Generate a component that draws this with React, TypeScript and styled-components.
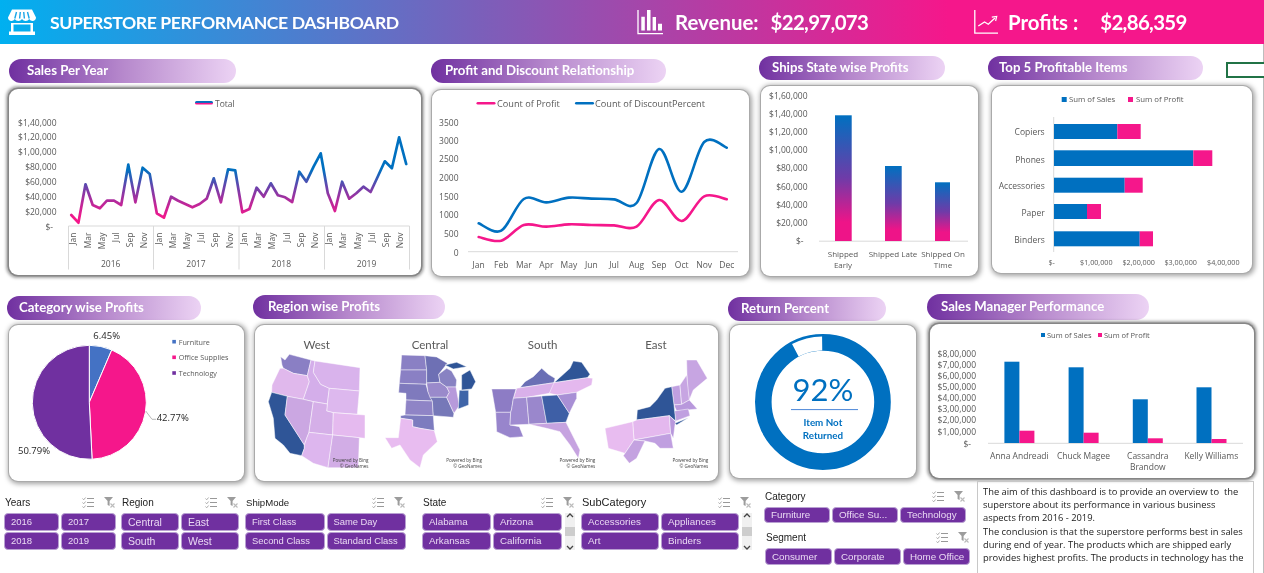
import React from "react";
import styled, { createGlobalStyle } from "styled-components";

const Global = createGlobalStyle`
  html, body { margin: 0; padding: 0; background: #fff; }
`;

const BLUE = "#0070C0";
const PINK = "#F5178B";
const PURPLE = "#7030A0";
const AXIS = "#D9D9D9";

const Page = styled.div`
  position: relative;
  width: 1264px;
  height: 573px;
  overflow: hidden;
  background: #fff;
  font-family: "Lato", "Liberation Sans", sans-serif;
  filter: blur(0.35px);
`;

const Header = styled.header`
  display: flex;
  align-items: center;
  height: 44px;
  padding-left: 8px;
  color: #fff;
  font-weight: 700;
  background: linear-gradient(90deg, #00b0f0 0%, #7b5fba 38%, #f5178b 75%, #f5178b 100%);
`;

const Title = styled.h1`
  margin: 0 0 0 14px;
  width: 587px;
  font-size: 17.6px;
  font-weight: 700;
  letter-spacing: -0.4px;
  white-space: nowrap;
`;

const Kpi = styled.div<{ $w: number; $gap: number; $valueGap: number }>`
  display: flex;
  align-items: center;
  width: ${(p) => p.$w}px;
  font-size: 20.4px;
  white-space: nowrap;
  gap: ${(p) => p.$gap}px;
  & > span + span {
    margin-left: ${(p) => p.$valueGap}px;
    letter-spacing: -0.65px;
  }
`;

const Rows = styled.main`
  border-right: 1px solid #bdbdbd;
  height: 529px;
  box-sizing: border-box;
`;

const Row = styled.div<{ $h: number }>`
  display: flex;
  align-items: flex-start;
  height: ${(p) => p.$h}px;
`;

const Panel = styled.section<{ $gap: number; $top: number }>`
  margin-left: ${(p) => p.$gap}px;
  margin-top: ${(p) => p.$top}px;
  flex: none;
`;

const Pill = styled.h2<{ $w: number; $h?: number; $pad: number }>`
  display: flex;
  align-items: center;
  box-sizing: border-box;
  width: ${(p) => p.$w}px;
  height: ${(p) => p.$h ?? 24}px;
  margin: 0;
  padding: 0 0 2px ${(p) => p.$pad}px;
  border-radius: 13px;
  color: #fff;
  font-size: 13.2px;
  font-weight: 700;
  white-space: nowrap;
  background: linear-gradient(90deg, ${PURPLE} 0%, #b688cc 50%, #ecd3f4 100%);
`;

const Card = styled.div<{ $w: number; $h: number; $ml: number; $mt: number; $strong?: boolean }>`
  width: ${(p) => p.$w}px;
  height: ${(p) => p.$h}px;
  margin-left: ${(p) => p.$ml}px;
  margin-top: ${(p) => p.$mt}px;
  border-radius: 9px;
  background: #fff;
  box-shadow: ${(p) =>
    p.$strong
      ? "0 0 0 1.5px #868686, 0 0 3px 2.5px rgba(0,0,0,.35)"
      : "0 0 0 1px #aaa, 1px 1px 5px 1.5px rgba(0,0,0,.36)"};
`;

const Chart = styled.svg`
  display: block;
  width: 100%;
  height: 100%;
  border-radius: inherit;
`;

const Label = styled.text<{ $size?: number; $color?: string; $weight?: number; $font?: string }>`
  font-family: ${(p) => p.$font ?? '"Open Sans"'}, "Liberation Sans", sans-serif;
  font-size: ${(p) => p.$size ?? 8.5}px;
  font-weight: ${(p) => p.$weight ?? 400};
  fill: ${(p) => p.$color ?? "#595959"};
  dominant-baseline: central;
`;

const CellCursor = styled.div`
  position: absolute;
  left: 1226px;
  top: 62px;
  width: 40px;
  height: 16px;
  box-sizing: border-box;
  border: 2px solid #217346;
  background: #fff;
`;

const Filters = styled.div`
  display: flex;
  align-items: flex-start;
  height: 92px;
`;

const Slicer = styled.div<{ $w: number; $left: number }>`
  width: ${(p) => p.$w}px;
  margin-left: ${(p) => p.$left}px;
  padding-top: 14px;
  flex: none;
`;

const SlicerHead = styled.div`
  display: flex;
  align-items: center;
  height: 14px;
  margin-bottom: 4px;
  padding-right: 1px;
`;

const SlicerName = styled.span<{ $size?: number }>`
  flex: 1;
  padding-left: 1px;
  font-family: "Liberation Sans", sans-serif;
  font-size: ${(p) => p.$size ?? 10}px;
  color: #222;
`;

const SlicerTools = styled.span`
  display: flex;
  align-items: center;
  gap: 10px;
`;

const SlicerBody = styled.div`
  display: flex;
  gap: 3px;
`;

const Buttons = styled.div<{ $cols: number; $w?: number }>`
  display: grid;
  flex: none;
  width: ${(p) => (p.$w ? `${p.$w}px` : "100%")};
  grid-template-columns: repeat(${(p) => p.$cols}, 1fr);
  gap: 1px 2px;
`;

const Btn = styled.div<{ $h?: number; $size?: number }>`
  box-sizing: border-box;
  height: ${(p) => p.$h ?? 18}px;
  padding-left: 6px;
  border: 1px solid #b9a0d2;
  border-radius: 4px;
  background: ${PURPLE};
  color: #ead9f3;
  font-family: "Liberation Sans", sans-serif;
  font-size: ${(p) => p.$size ?? 9.8}px;
  line-height: ${(p) => (p.$h ?? 18) - 2}px;
  white-space: nowrap;
  overflow: hidden;
`;

const Scroll = styled.div`
  display: flex;
  flex-direction: column;
  align-items: center;
  justify-content: space-between;
  width: 10px;
  height: 37px;
  background: #f0f0f0;
`;

const ScrollThumb = styled.i`
  display: block;
  width: 10px;
  height: 9px;
  background: #cdcdcd;
`;

const Stack = styled.div`
  width: 206px;
  margin-left: 12px;
  flex: none;
`;

const StackSlicer = styled.div<{ $top: number; $ml: number; $w: number }>`
  margin-top: ${(p) => p.$top}px;
  margin-left: ${(p) => p.$ml}px;
  width: ${(p) => p.$w}px;
`;

const Note = styled.div`
  flex: none;
  box-sizing: border-box;
  width: 277px;
  height: 92px;
  margin-left: 7px;
  padding: 3px 4px 0 5px;
  border: 1px solid #c8c8c8;
  border-bottom: 0;
  font-family: "Open Sans", "Liberation Sans", sans-serif;
  font-size: 9.35px;
  line-height: 13.2px;
  color: #1c1c1c;
  overflow: hidden;
`;

/* ---------- helpers ---------- */

type Pt = [number, number];

const smooth = (pts: Pt[]) => {
  let d = `M${pts[0][0]} ${pts[0][1]}`;
  for (let i = 0; i < pts.length - 1; i++) {
    const p0 = pts[Math.max(i - 1, 0)];
    const p1 = pts[i];
    const p2 = pts[i + 1];
    const p3 = pts[Math.min(i + 2, pts.length - 1)];
    const c1: Pt = [p1[0] + (p2[0] - p0[0]) / 6, p1[1] + (p2[1] - p0[1]) / 6];
    const c2: Pt = [p2[0] - (p3[0] - p1[0]) / 6, p2[1] - (p3[1] - p1[1]) / 6];
    d += `C${c1[0]} ${c1[1]} ${c2[0]} ${c2[1]} ${p2[0]} ${p2[1]}`;
  }
  return d;
};

const polar = (cx: number, cy: number, r: number, turn: number): Pt => {
  const a = turn * 2 * Math.PI - Math.PI / 2;
  return [cx + r * Math.cos(a), cy + r * Math.sin(a)];
};

const slice = (cx: number, cy: number, r: number, from: number, to: number) => {
  const [x1, y1] = polar(cx, cy, r, from);
  const [x2, y2] = polar(cx, cy, r, to);
  return `M${cx} ${cy}L${x1} ${y1}A${r} ${r} 0 ${to - from > 0.5 ? 1 : 0} 1 ${x2} ${y2}Z`;
};

/* ---------- icons ---------- */

const StoreIcon = () => (
  <svg width="28" height="26" viewBox="0 0 28 26">
    <path
      d="M4 0.5H24L28 8.5C28 10.8 26.4 12 24.7 12C23.2 12 22 11.2 21.2 10C20.5 11.2 19.2 12 17.6 12C16.2 12 14.9 11.2 14 10C13.1 11.2 11.8 12 10.4 12C8.8 12 7.5 11.2 6.8 10C6 11.2 4.8 12 3.3 12C1.6 12 0 10.8 0 8.5Z"
      fill="#fff"
    />
    <path d="M8.5 3L6.8 9.5M12.3 3L11.6 9.5M15.7 3L16.4 9.5M19.5 3L21.2 9.5" stroke="#19a6e8" strokeWidth="1.4" />
    <path
      fillRule="evenodd"
      d="M3 14H25V22.5H27V26H1V22.5H3ZM5.5 15.5V22.5H22.5V15.5Z"
      fill="#fff"
    />
  </svg>
);

const BarsIcon = () => (
  <svg width="26" height="25" viewBox="0 0 26 25">
    <path d="M1 0V23.6H26" fill="none" stroke="#fff" strokeWidth="1.3" />
    <path fill="#fff" d="M4.3 6.7H7.8V20.4H4.3ZM10 0H13.5V20.4H10ZM15.6 7H19V20.4H15.6ZM21 13.7H25V20.4H21Z" />
  </svg>
);

const TrendIcon = () => (
  <svg width="24" height="24" viewBox="0 0 24 24">
    <path d="M.8 0V23.2H24" fill="none" stroke="#fff" strokeWidth="1.3" />
    <path d="M4.3 16L10.5 12L14.3 14.2L21 8" fill="none" stroke="#fff" strokeWidth="1.3" />
    <path d="M17.8 7.2L22.7 6.4L21.6 11" fill="none" stroke="#fff" strokeWidth="1.2" />
  </svg>
);

const MultiIcon = () => (
  <svg width="12" height="11" viewBox="0 0 12 11">
    <path d="M5 1.5H12M5 5.5H12M5 9.5H12" stroke="#999" strokeWidth="1.2" />
    <path d="M.5 1.5L1.7 2.8L3.6.5M.5 5.5L1.7 6.8L3.6 4.5M.5 9.5L1.7 10.8L3.6 8.5" fill="none" stroke="#aaa" strokeWidth="1" />
  </svg>
);

const ClearIcon = () => (
  <svg width="11" height="11" viewBox="0 0 11 11">
    <path d="M0 0H9L5.6 4V9L3.6 8V4Z" fill="#9c9c9c" />
    <path d="M6.5 6.5L10.5 10.5M10.5 6.5L6.5 10.5" stroke="#bbb" strokeWidth="1.1" />
  </svg>
);

const Chevron = ({ up }: { up?: boolean }) => (
  <svg width="8" height="5" viewBox="0 0 8 5" style={up ? undefined : { transform: "scaleY(-1)" }}>
    <path d="M1 4L4 1L7 4" fill="none" stroke="#444" strokeWidth="1.3" />
  </svg>
);

/* ---------- charts ---------- */

const MONTHS = ["Jan", "Mar", "May", "Jul", "Sep", "Nov"];
const SALES = [
  645, 668, 553, 615, 625, 602, 602, 615, 494, 607, 503, 522, 640, 653, 590, 602, 612, 622, 612, 596, 535, 607, 508, 511,
  637, 627, 563, 590, 550, 586, 592, 606, 515, 545, 500, 460, 580, 633, 545, 596, 580, 560, 576, 530, 484, 505, 412, 492,
];

const SalesChart = () => {
  const line = SALES.map((y, i) => `${(71.3 + i * 7.125).toFixed(1)},${(y / 3).toFixed(1)}`).join(" ");
  const labels = ["$1,40,000", "$1,20,000", "$1,00,000", "$80,000", "$60,000", "$40,000", "$20,000"];
  const ticks = [68.5, 153.5, 239, 324.5, 409.5];
  return (
    <Chart viewBox="9 89 412 186">
      <defs>
        <linearGradient id="salesStroke" gradientUnits="userSpaceOnUse" x1="0" y1="218" x2="0" y2="170">
          <stop offset="0" stopColor={PINK} />
          <stop offset="0.35" stopColor="#B32A9C" />
          <stop offset="0.65" stopColor="#6A43AC" />
          <stop offset="1" stopColor={BLUE} />
        </linearGradient>
        <linearGradient id="legendStroke" gradientUnits="userSpaceOnUse" x1="0" y1="101" x2="0" y2="104.5">
          <stop offset="0.4" stopColor={BLUE} />
          <stop offset="0.7" stopColor={PINK} />
        </linearGradient>
      </defs>
      <rect x="195" y="101" width="18" height="3.4" fill="url(#legendStroke)" rx="1.5" />
      <Label x="215" y="103">Total</Label>
      {labels.map((t, i) => (
        <Label key={t} x="56.5" y={122 + i * 14.9} textAnchor="end">{t}</Label>
      ))}
      <Label x="53" y="226.7" textAnchor="end">$-</Label>
      <path d={`M68.5 226H409.5${ticks.map((x) => `M${x} 226V269.5`).join("")}`} stroke={AXIS} fill="none" />
      <polyline points={line} fill="none" stroke="url(#salesStroke)" strokeWidth="2.7" strokeLinejoin="round" strokeLinecap="round" />
      {[0, 1, 2, 3].map((yr) => (
        <g key={yr}>
          {MONTHS.map((m, i) => (
            <Label key={m} textAnchor="end" transform={`translate(${72.8 + yr * 85.3 + i * 14.2} 232.5) rotate(-90)`}>{m}</Label>
          ))}
          <Label x={110.7 + yr * 85.3} y="263" textAnchor="middle">{2016 + yr}</Label>
        </g>
      ))}
    </Chart>
  );
};

const DISCOUNT = [670, 692, 597, 607, 593, 596, 598, 609, 447, 575, 426, 443];
const PROFIT = [711, 722, 675, 680, 673, 675, 676, 680, 600, 663, 589, 598];
const MONTHS12 = ["Jan", "Feb", "Mar", "Apr", "May", "Jun", "Jul", "Aug", "Sep", "Oct", "Nov", "Dec"];

const RelationChart = () => {
  const pts = (a: number[]) => a.map((y, i): Pt => [478.7 + i * 22.55, y / 3]);
  const ys = [252, 233.3, 214.6, 196, 177.4, 158.7, 140.2, 122];
  return (
    <Chart viewBox="432 90 317 186">
      <rect x="476.5" y="102" width="19" height="2.6" rx="1.3" fill={PINK} />
      <Label x="497" y="103" $size={9.2}>Count of Profit</Label>
      <rect x="575" y="102" width="19" height="2.6" rx="1.3" fill={BLUE} />
      <Label x="595" y="103" $size={9.2}>Count of DiscountPercent</Label>
      {ys.map((y, i) => (
        <Label key={i} x="458.5" y={y} textAnchor="end">{i * 500}</Label>
      ))}
      <path d="M468 251.7H738" stroke={AXIS} />
      {MONTHS12.map((m, i) => (
        <Label key={m} x={478.7 + i * 22.55} y="264.3" textAnchor="middle">{m}</Label>
      ))}
      <path d={smooth(pts(DISCOUNT))} fill="none" stroke={BLUE} strokeWidth="2.6" strokeLinecap="round" />
      <path d={smooth(pts(PROFIT))} fill="none" stroke={PINK} strokeWidth="2.6" strokeLinecap="round" />
    </Chart>
  );
};

const ShipChart = () => {
  const ys = ["$1,60,000", "$1,40,000", "$1,20,000", "$1,00,000", "$80,000", "$60,000", "$40,000", "$20,000"];
  const bars: [number, number, number][] = [
    [835, 16.7, 115.3],
    [885, 16.7, 166],
    [935, 15, 182.3],
  ];
  return (
    <Chart viewBox="761 86 217 190">
      <defs>
        <linearGradient id="shipBar" x1="0" y1="0" x2="0" y2="1">
          <stop offset="0" stopColor={BLUE} />
          <stop offset="0.5" stopColor="#6F3BA8" />
          <stop offset="0.85" stopColor="#EE1488" />
          <stop offset="1" stopColor="#EE1488" />
        </linearGradient>
      </defs>
      {ys.map((t, i) => (
        <Label key={t} x="807.5" y={95.7 + i * 18.07} textAnchor="end">{t}</Label>
      ))}
      <Label x="803.5" y="240.7" textAnchor="end">$-</Label>
      <path d="M819 241.2H968" stroke={AXIS} />
      {bars.map(([x, w, top]) => (
        <rect key={x} x={x} y={top} width={w} height={241 - top} fill="url(#shipBar)" />
      ))}
      <Label x="843" y="253" textAnchor="middle" $size={8}>Shipped</Label>
      <Label x="843" y="264" textAnchor="middle" $size={8}>Early</Label>
      <Label x="893" y="253" textAnchor="middle" $size={8}>Shipped Late</Label>
      <Label x="943" y="253" textAnchor="middle" $size={8}>Shipped On</Label>
      <Label x="943" y="264" textAnchor="middle" $size={8}>Time</Label>
    </Chart>
  );
};

const ItemsChart = () => {
  const rows: [string, number, number, number, number, number][] = [
    ["Copiers", 124, 15, 1117.3, 1140.7, 131.7],
    ["Phones", 150.3, 15.7, 1193.3, 1212.3, 159],
    ["Accessories", 177.7, 15, 1124.7, 1142.7, 185.3],
    ["Paper", 204, 15, 1087, 1101, 212],
    ["Binders", 231.3, 15, 1139.7, 1153, 239],
  ];
  const xs: [string, number][] = [["$-", 1051.7], ["$1,00,000", 1096.3], ["$2,00,000", 1138.7], ["$3,00,000", 1180.7], ["$4,00,000", 1223.3]];
  return (
    <Chart viewBox="992 86 260 187">
      <rect x="1061.7" y="97" width="5" height="5" fill={BLUE} />
      <Label x="1069" y="99.3" $size={7.8}>Sum of Sales</Label>
      <rect x="1128" y="97" width="5" height="5" fill={PINK} />
      <Label x="1136" y="99.3" $size={7.8}>Sum of Profit</Label>
      <path d="M1053.7 117V252" stroke={AXIS} />
      {rows.map(([name, y, h, b, p, ty]) => (
        <g key={name}>
          <rect x="1054" y={y} width={b - 1054} height={h} fill={BLUE} />
          <rect x={b} y={y} width={p - b} height={h} fill={PINK} />
          <Label x="1044.7" y={ty} textAnchor="end">{name}</Label>
        </g>
      ))}
      {xs.map(([t, x]) => (
        <Label key={t} x={x} y="262" textAnchor="middle" $size={7.2}>{t}</Label>
      ))}
    </Chart>
  );
};

const PieChart = () => {
  const cx = 89.3;
  const cy = 402.3;
  const r = 57;
  return (
    <Chart viewBox="9 325 235 156">
      <path d={slice(cx, cy, r, 0, 0.0645)} fill="#4472C4" stroke="#fff" />
      <path d={slice(cx, cy, r, 0.0645, 0.4922)} fill={PINK} stroke="#fff" />
      <path d={slice(cx, cy, r, 0.4922, 1)} fill={PURPLE} stroke="#fff" />
      <path d="M145.7 411L152 419.3H156" fill="none" stroke="#a6a6a6" strokeWidth="0.8" />
      <Label x="106.7" y="335.7" textAnchor="middle" $size={9.5} $color="#262626">6.45%</Label>
      <Label x="156.7" y="417" $size={9.5} $color="#262626">42.77%</Label>
      <Label x="18" y="450.3" $size={9.5} $color="#262626">50.79%</Label>
      {[
        ["Furniture", "#4472C4", 341.7],
        ["Office Supplies", PINK, 357.3],
        ["Technology", PURPLE, 373],
      ].map(([t, c, y]) => (
        <g key={t as string}>
          <rect x="172.3" y={(y as number) - 1.8} width="3.6" height="3.6" fill={c as string} />
          <Label x="178.7" y={y as number} $size={7.2}>{t}</Label>
        </g>
      ))}
    </Chart>
  );
};

type Shape = [string, string];

const WEST_CENTRAL: Shape[] = [
  ["#8A7FC4", "92,215 105,225 118,208 183,225 172,272 130,265 100,250 96,240"],
  ["#E0B8EC", "90,250 100,250 130,265 172,272 178,290 160,343 112,334 65,322 66,300"],
  ["#2F5597", "65,322 112,334 105,390 163,480 163,490 155,512 120,505 100,480 75,460 70,400 55,350"],
  ["#D4AEEA", "183,225 195,228 190,262 212,298 238,310 232,357 190,350 160,343 178,290 172,272"],
  ["#D9B3EC", "195,228 330,248 328,318 238,310 212,298 190,262"],
  ["#DDB8EE", "238,310 328,318 322,388 250,383 230,378 232,357"],
  ["#CBA7E2", "112,334 160,343 190,350 177,442 170,460 163,480 105,390"],
  ["#D5AFE8", "190,350 232,357 230,378 250,383 248,450 177,442"],
  ["#E5BAEF", "250,383 345,390 345,460 248,450"],
  ["#DDB6EE", "177,442 248,450 234,548 190,535 155,512 163,490 163,480 170,460"],
  ["#D2ADE6", "248,450 328,458 325,548 234,548"],
  ["#8A80C4", "455,210 525,212 530,255 452,255"],
  ["#8A80C4", "452,255 530,255 530,294 528,298 448,295"],
  ["#7F7ABD", "448,295 528,298 534,320 547,348 468,345 468,325 446,323"],
  ["#8F84C6", "468,345 547,348 550,392 465,390"],
  ["#6E70B4", "525,212 560,216 592,235 566,268 570,292 530,294 530,255"],
  ["#9A8ACB", "530,294 570,292 590,306 598,322 590,337 540,337 534,320"],
  ["#7678B8", "540,337 590,337 612,385 610,397 550,392 547,348"],
  ["#8882C2", "566,268 590,250 605,258 620,285 618,306 590,306 570,292"],
  ["#B79ADB", "590,306 618,306 628,362 612,385 590,337 598,322"],
  ["#3F65A8", "628,316 656,316 656,360 625,372"],
  ["#2F5597", "635,270 660,255 677,290 665,312 635,315"],
  ["#2F5597", "585,240 620,232 650,245 610,252"],
  ["#7D7CBF", "452,392 465,390 550,392 553,437 510,430 488,425 488,405 452,400"],
  ["#E8BCF0", "452,400 488,405 488,425 510,430 553,437 562,470 520,510 510,548 480,525 450,480 425,490 405,458 445,458"],
];

const SOUTH_EAST: Shape[] = [
  ["#6A6FB5", "120,308 135,290 160,275 185,250 205,268 225,280 222,293"],
  ["#2F5597", "222,293 270,250 280,228 305,232 330,268 322,278"],
  ["#D9B0EA", "110,310 222,293 232,296 208,325 140,337 100,340"],
  ["#E4B8EE", "222,293 322,278 338,280 335,300 290,322 232,330 208,325"],
  ["#8D7CC5", "35,312 108,312 100,340 95,372 92,382 47,382 45,370"],
  ["#9885CC", "47,382 92,382 90,420 118,425 130,455 90,458 50,440"],
  ["#9F8BD0", "100,340 140,337 147,418 90,420 92,382 95,372"],
  ["#9A87CC", "140,337 185,333 200,415 147,418"],
  ["#3E5FA6", "185,333 232,330 268,385 258,412 200,415"],
  ["#A88FD5", "232,330 290,322 290,340 268,385"],
  ["#C6A3E0", "147,418 200,415 258,412 300,495 295,520 270,480 240,440 200,430"],
  ["#C7A5E2", "620,225 650,225 682,280 640,315 628,345 622,310"],
  ["#C0A0E0", "575,305 600,300 605,358 582,360"],
  ["#C7A5E2", "600,300 620,270 628,345 605,358"],
  ["#B898DC", "582,360 605,358 628,345 652,372 590,378"],
  ["#C0A0E0", "583,378 625,372 630,392 588,408"],
  ["#2F5597", "472,375 510,365 530,345 555,310 575,305 582,360 587,408 568,392 470,405"],
  ["#E4B8EE", "458,410 470,405 568,392 572,445 462,465"],
  ["#E8BCF0", "375,430 458,410 462,465 435,505 385,490"],
  ["#B898DC", "568,392 587,410 585,420 580,460 572,445"],
  ["#C09FE0", "462,465 572,445 580,490 540,490 525,475 495,468"],
  ["#C4A2E0", "462,465 495,468 470,520 448,535 430,512 435,505"],
  ["#2F5597", "585,415 625,398 590,420"],
];

const RegionChart = () => (
  <Chart viewBox="255 325 463 156">
    <g transform="translate(250 285) scale(.3333)" stroke="#fff" strokeWidth="1.4" strokeLinejoin="round">
      {WEST_CENTRAL.map(([c, p], i) => <polygon key={i} fill={c} points={p} />)}
    </g>
    <g transform="translate(480 285) scale(.3333)" stroke="#fff" strokeWidth="1.4" strokeLinejoin="round">
      {SOUTH_EAST.map(([c, p], i) => <polygon key={i} fill={c} points={p} />)}
    </g>
    {[["West", 316.7], ["Central", 430], ["South", 542.7], ["East", 656]].map(([t, x]) => (
      <Label key={t} x={x} y="344" textAnchor="middle" $size={11.5} $font="Lato">{t}</Label>
    ))}
    {[368.5, 482, 595.3, 708.3].map((x) => (
      <g key={x}>
        <Label x={x} y="460" textAnchor="end" $size={4.6} $color="#444">Powered by Bing</Label>
        <Label x={x} y="466.3" textAnchor="end" $size={4.6} $color="#444">© GeoNames</Label>
      </g>
    ))}
  </Chart>
);

const ReturnChart = () => {
  const cx = 822.9;
  const cy = 402;
  const [x1, y1] = polar(cx, cy, 58.6, -0.078);
  const [x2, y2] = polar(cx, cy, 58.6, -0.002);
  return (
    <Chart viewBox="730 325 186 153">
      <circle cx={cx} cy={cy} r="59.6" fill="none" stroke={BLUE} strokeWidth="16.6" />
      <path d={`M${x1} ${y1}A58.6 58.6 0 0 1 ${x2} ${y2}`} fill="none" stroke="#fff" strokeWidth="14" />
      <Label x={cx} y="389" textAnchor="middle" $size={31} $color={BLUE} $font="Lato">92%</Label>
      <path d="M791 409.6H858" stroke="#4A86D8" />
      <Label x={cx} y="422" textAnchor="middle" $size={9.8} $weight={700} $color={BLUE} $font="Lato">Item Not</Label>
      <Label x={cx} y="435" textAnchor="middle" $size={9.8} $weight={700} $color={BLUE} $font="Lato">Returned</Label>
    </Chart>
  );
};

const ManagerChart = () => {
  const ys = ["$8,00,000", "$7,00,000", "$6,00,000", "$5,00,000", "$4,00,000", "$3,00,000", "$2,00,000", "$1,00,000"];
  const tops = [353, 364.3, 375.7, 386.3, 397.3, 408.7, 419.7, 431.3];
  const bars: [number, number, number][] = [
    [1004.4, 361.7, 430.7],
    [1068.6, 367.3, 432.7],
    [1132.8, 399.3, 438.3],
    [1196.5, 387.3, 439],
  ];
  return (
    <Chart viewBox="930 324 324 154">
      <rect x="1041" y="333" width="4" height="4" fill={BLUE} />
      <Label x="1047" y="335.3" $size={7.5}>Sum of Sales</Label>
      <rect x="1098" y="333" width="4" height="4" fill={PINK} />
      <Label x="1104" y="335.3" $size={7.5}>Sum of Profit</Label>
      {ys.map((t, i) => (
        <Label key={t} x="976" y={tops[i]} textAnchor="end">{t}</Label>
      ))}
      <Label x="971" y="443" textAnchor="end">$-</Label>
      <path d="M988 443.3H1243" stroke={AXIS} />
      {bars.map(([x, b, p]) => (
        <g key={x}>
          <rect x={x} y={b} width="15" height={443 - b} fill={BLUE} />
          <rect x={x + 15} y={p} width="15" height={443 - p} fill={PINK} />
        </g>
      ))}
      <Label x="1019.3" y="455" textAnchor="middle">Anna Andreadi</Label>
      <Label x="1083.5" y="455" textAnchor="middle">Chuck Magee</Label>
      <Label x="1147.8" y="455" textAnchor="middle">Cassandra</Label>
      <Label x="1147.8" y="466.7" textAnchor="middle">Brandow</Label>
      <Label x="1211.3" y="455" textAnchor="middle">Kelly Williams</Label>
    </Chart>
  );
};

/* ---------- slicers ---------- */

const Tools = () => (
  <SlicerTools>
    <MultiIcon />
    <ClearIcon />
  </SlicerTools>
);

const Bar = () => (
  <Scroll>
    <Chevron up />
    <ScrollThumb />
    <Chevron />
  </Scroll>
);

const Filter = ({
  name, items, w, left, scroll, btnSize, nameSize,
}: { name: string; items: string[]; w: number; left: number; scroll?: boolean; btnSize?: number; nameSize?: number }) => (
  <Slicer $w={w} $left={left}>
    <SlicerHead>
      <SlicerName $size={nameSize}>{name}</SlicerName>
      <Tools />
    </SlicerHead>
    <SlicerBody>
      <Buttons $cols={2} $w={scroll ? w - 13 : undefined}>
        {items.map((t) => <Btn key={t} $size={btnSize}>{t}</Btn>)}
      </Buttons>
      {scroll && <Bar />}
    </SlicerBody>
  </Slicer>
);

export default function App() {
  return (
    <Page>
      <Global />
      <Header>
        <StoreIcon />
        <Title>SUPERSTORE PERFORMANCE DASHBOARD</Title>
        <Kpi $w={337} $gap={12} $valueGap={0}>
          <BarsIcon />
          <span>Revenue:</span>
          <span>$22,97,073</span>
        </Kpi>
        <Kpi $w={230} $gap={10} $valueGap={12}>
          <TrendIcon />
          <span>Profits :</span>
          <span>$2,86,359</span>
        </Kpi>
      </Header>
      <CellCursor />
      <Rows>
        <Row $h={250}>
          <Panel $gap={9} $top={15}>
            <Pill $w={227} $pad={18}>Sales Per Year</Pill>
            <Card $w={412} $h={186} $ml={0} $mt={6} $strong><SalesChart /></Card>
          </Panel>
          <Panel $gap={10} $top={15}>
            <Pill $w={235} $pad={14}>Profit and Discount Relationship</Pill>
            <Card $w={317} $h={186} $ml={1} $mt={7}><RelationChart /></Card>
          </Panel>
          <Panel $gap={10} $top={12}>
            <Pill $w={186} $pad={13}>Ships State wise Profits</Pill>
            <Card $w={217} $h={190} $ml={2} $mt={6}><ShipChart /></Card>
          </Panel>
          <Panel $gap={10} $top={12}>
            <Pill $w={215} $pad={11}>Top 5 Profitable Items</Pill>
            <Card $w={260} $h={187} $ml={4} $mt={6}><ItemsChart /></Card>
          </Panel>
        </Row>
        <Row $h={187}>
          <Panel $gap={7} $top={2}>
            <Pill $w={194} $pad={12}>Category wise Profits</Pill>
            <Card $w={235} $h={156} $ml={2} $mt={5}><PieChart /></Card>
          </Panel>
          <Panel $gap={9} $top={1}>
            <Pill $w={192} $pad={15}>Region wise Profits</Pill>
            <Card $w={463} $h={156} $ml={2} $mt={6}><RegionChart /></Card>
          </Panel>
          <Panel $gap={10} $top={3}>
            <Pill $w={158} $pad={13}>Return Percent</Pill>
            <Card $w={186} $h={153} $ml={2} $mt={4}><ReturnChart /></Card>
          </Panel>
          <Panel $gap={11} $top={0}>
            <Pill $w={222} $h={26} $pad={14}>Sales Manager Performance</Pill>
            <Card $w={324} $h={154} $ml={3} $mt={4} $strong><ManagerChart /></Card>
          </Panel>
        </Row>
        <Filters>
          <Filter name="Years" items={["2016", "2017", "2018", "2019"]} w={112} left={4} btnSize={9.5} />
          <Filter name="Region" items={["Central", "East", "South", "West"]} w={118} left={5} btnSize={10.5} />
          <Filter name="ShipMode" items={["First Class", "Same Day", "Second Class", "Standard Class"]} w={161} left={6} btnSize={9.4} nameSize={9.6} />
          <Filter name="State" items={["Alabama", "Arizona", "Arkansas", "California"]} w={153} left={16} scroll />
          <Filter name="SubCategory" items={["Accessories", "Appliances", "Art", "Binders"]} w={171} left={6} scroll nameSize={11} />
          <Stack>
            <StackSlicer $top={8} $ml={0} $w={202}>
              <SlicerHead>
                <SlicerName>Category</SlicerName>
                <Tools />
              </SlicerHead>
              <Buttons $cols={3}>
                {["Furniture", "Office Su...", "Technology"].map((t) => <Btn key={t} $h={16}>{t}</Btn>)}
              </Buttons>
            </StackSlicer>
            <StackSlicer $top={7} $ml={1} $w={205}>
              <SlicerHead>
                <SlicerName>Segment</SlicerName>
                <Tools />
              </SlicerHead>
              <Buttons $cols={3}>
                {["Consumer", "Corporate", "Home Office"].map((t) => <Btn key={t} $h={17}>{t}</Btn>)}
              </Buttons>
            </StackSlicer>
          </Stack>
          <Note>
            The aim of this dashboard is to provide an overview to&nbsp; the superstore about its performance in various business aspects from 2016 - 2019.
            <br />
            The conclusion is that the superstore performs best in sales during end of year. The products which are shipped early provides highest profits. The products in technology has the
          </Note>
        </Filters>
      </Rows>
    </Page>
  );
}
